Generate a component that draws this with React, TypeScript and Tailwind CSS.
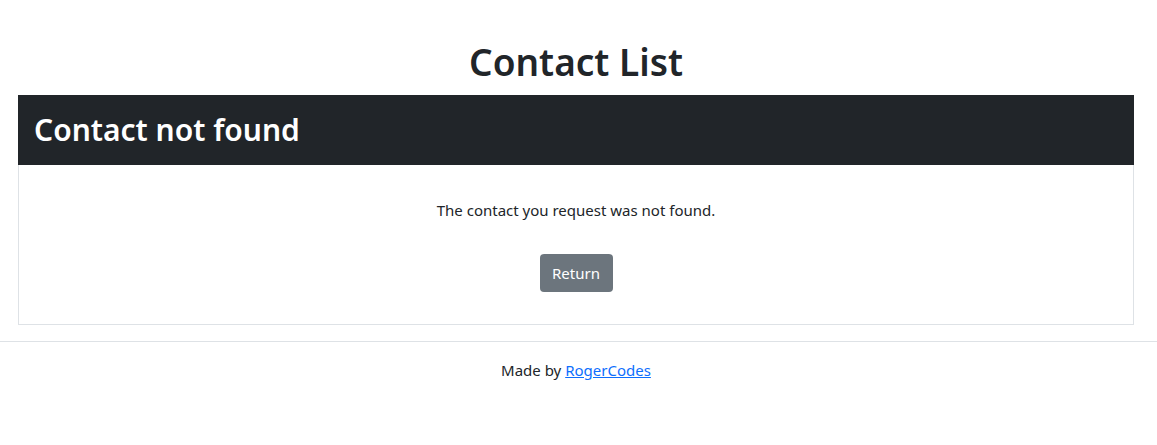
export default function App() {
  return (
    <div className="min-h-[445px] bg-white text-[#212529] font-['Segoe_UI','Noto_Sans',sans-serif]">
      <main className="pl-[18px] pr-[23px] pt-[38px]">
        <h1 className="text-center text-[37px] font-semibold leading-[48px] mb-[9px]">Contact List</h1>
        <div className="border border-[#dee2e6]">
          <div className="bg-[#212529] px-4 py-4 -m-px">
            <h2 className="text-white text-[30px] font-semibold leading-[38px]">Contact not found</h2>
          </div>
          <div className="flex flex-col items-center pt-[34px] pb-[32px]">
            <p className="text-[15px] leading-6">The contact you request was not found.</p>
            <button className="mt-[32px] h-[38px] w-[73px] rounded bg-[#6c757d] text-white text-[15px]">Return</button>
          </div>
        </div>
      </main>
      <footer className="mt-[16px] border-t border-[#dee2e6] pt-4 pl-[18px] pr-[23px] text-center">
        <p className="text-[15px] leading-6">
          Made by <a href="#" className="text-[#0d6efd] underline">RogerCodes</a>
        </p>
      </footer>
    </div>
  );
}
